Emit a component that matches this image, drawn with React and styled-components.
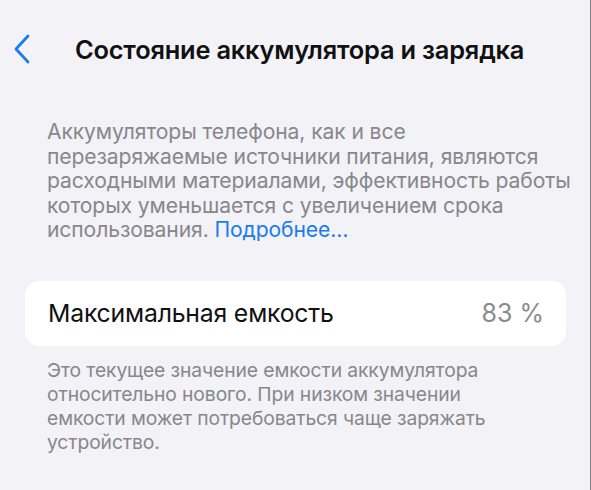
import React from "react";
import styled, { createGlobalStyle } from "styled-components";

const Global = createGlobalStyle`
  html, body { margin: 0; padding: 0; }
  body {
    background: #f2f2f7;
    font-family: Inter, "Noto Sans", sans-serif;
    -webkit-font-smoothing: antialiased;
  }
`;

const Screen = styled.div`
  width: 591px;
  height: 490px;
  box-sizing: border-box;
  background: #f2f2f7;
  border-right: 1px solid #7c7c82;
  overflow: hidden;
`;

const NavBar = styled.header`
  display: flex;
  align-items: center;
  height: 58px;
  padding: 20px 0 0 12px;
  gap: 43px;
`;

const BackButton = styled.button`
  display: flex;
  align-items: center;
  border: 0;
  background: none;
  padding: 0;
  color: #1a7cf0;
  cursor: pointer;
`;

const Title = styled.h1`
  margin: 0;
  font-size: 25.4px;
  font-weight: 600;
  color: #111;
  letter-spacing: -0.2px;
`;

const Content = styled.main`
  padding: 42px 24px 0 25px;
`;

const Note = styled.p`
  margin: ${(p) => p.$margin || "0"};
  padding: 0 22px;
  font-size: ${(p) => p.$size || "20px"};
  line-height: ${(p) => p.$lh || "24.5px"};
  color: #87878c;
  letter-spacing: -0.1px;
  white-space: nowrap;
`;

const Link = styled.a`
  color: #1a7cf0;
  text-decoration: none;
`;

const Card = styled.section`
  display: flex;
  align-items: center;
  justify-content: space-between;
  height: 65px;
  padding: 0 22px 0 23px;
  background: #fff;
  border-radius: 14px;
`;

const Label = styled.span`
  font-size: 24.8px;
  color: #111;
  letter-spacing: -0.2px;
`;

const Value = styled.span`
  font-size: 25px;
  color: #8a8a8e;
`;

export default function App() {
  return (
    <>
      <Global />
      <Screen>
        <NavBar>
          <BackButton aria-label="Назад">
            <svg width="20" height="30" viewBox="0 0 20 30" fill="none">
              <path
                d="M16 2 L4 15 L16 28"
                stroke="currentColor"
                strokeWidth="2.8"
                strokeLinecap="round"
                strokeLinejoin="round"
              />
            </svg>
          </BackButton>
          <Title>Состояние аккумулятора и зарядка</Title>
        </NavBar>
        <Content>
          <Note $margin="0 0 38px" $size="21.1px">
            Аккумуляторы телефона, как и все
            <br />
            перезаряжаемые источники питания, являются
            <br />
            расходными материалами, эффективность работы
            <br />
            которых уменьшается с увеличением срока
            <br />
            использования. <Link href="#">Подробнее…</Link>
          </Note>
          <Card>
            <Label>Максимальная емкость</Label>
            <Value>83 %</Value>
          </Card>
          <Note $margin="12px 0 0" $size="19.3px" $lh="24px">
            Это текущее значение емкости аккумулятора
            <br />
            относительно нового. При низком значении
            <br />
            емкости может потребоваться чаще заряжать
            <br />
            устройство.
          </Note>
        </Content>
      </Screen>
    </>
  );
}
